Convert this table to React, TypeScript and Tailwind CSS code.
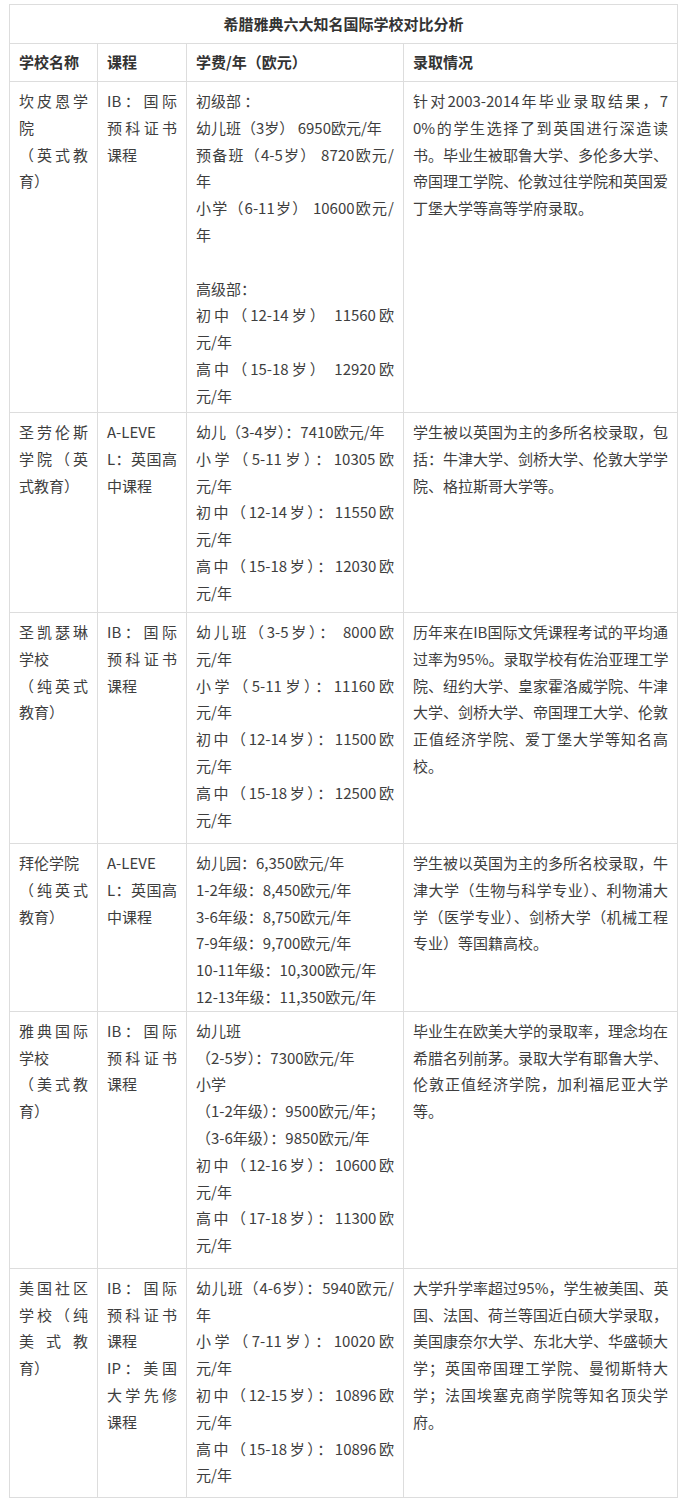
import React from 'react';

// each cell is a list of paragraphs; '|' marks where the original text wrapped
type Cell = string[];

interface Row {
  h: string;
  name: Cell;
  course: Cell;
  fee: Cell;
  result: Cell;
}

const IB: Cell = ['IB：国际|预科证书|课程'];
const AL: Cell = ['A-LEVE|L：英国高|中课程'];

const rows: Row[] = [
  {
    h: 'h-[331px]',
    name: ['坎皮恩学|院', '（英式教|育）'],
    course: IB,
    fee: [
      '初级部 ：',
      '幼儿班（3岁） 6950欧元/年',
      '预备班（4-5岁） 8720欧元/|年',
      '小学（6-11岁） 10600欧元/|年',
      '\u00a0',
      '高级部：',
      '初中（12-14岁） 11560欧|元/年',
      '高中（15-18岁） 12920欧|元/年',
    ],
    result: [
      '针对2003-2014年毕业录取结果，7|0%的学生选择了到英国进行深造读|书。毕业生被耶鲁大学、多伦多大学、|帝国理工学院、伦敦过往学院和英国爱|丁堡大学等高等学府录取。',
    ],
  },
  {
    h: 'h-[200px]',
    name: ['圣劳伦斯|学院（英|式教育）'],
    course: AL,
    fee: [
      '幼儿（3-4岁）：7410欧元/年',
      '小学（5-11岁）：10305欧|元/年',
      '初中（12-14岁）：11550欧|元/年',
      '高中（15-18岁）：12030欧|元/年',
    ],
    result: ['学生被以英国为主的多所名校录取，包|括：牛津大学、剑桥大学、伦敦大学学|院、格拉斯哥大学等。'],
  },
  {
    h: 'h-[231px]',
    name: ['圣凯瑟琳|学校', '（纯英式|教育）'],
    course: IB,
    fee: [
      '幼儿班（3-5岁）： 8000欧|元/年',
      '小学（5-11岁）：11160欧|元/年',
      '初中（12-14岁）：11500欧|元/年',
      '高中（15-18岁）：12500欧|元/年',
    ],
    result: [
      '历年来在IB国际文凭课程考试的平均通|过率为95%。录取学校有佐治亚理工学|院、纽约大学、皇家霍洛威学院、牛津|大学、剑桥大学、帝国理工大学、伦敦|正值经济学院、爱丁堡大学等知名高|校。',
    ],
  },
  {
    h: 'h-[167px]',
    name: ['拜伦学院', '（纯英式|教育）'],
    course: AL,
    fee: [
      '幼儿园：6,350欧元/年',
      '1-2年级：8,450欧元/年',
      '3-6年级：8,750欧元/年',
      '7-9年级：9,700欧元/年',
      '10-11年级：10,300欧元/年',
      '12-13年级：11,350欧元/年',
    ],
    result: ['学生被以英国为主的多所名校录取，牛|津大学（生物与科学专业）、利物浦大|学（医学专业）、剑桥大学（机械工程|专业）等国籍高校。'],
  },
  {
    h: 'h-[257px]',
    name: ['雅典国际|学校', '（美式教|育）'],
    course: IB,
    fee: [
      '幼儿班',
      '（2-5岁）：7300欧元/年',
      '小学',
      '（1-2年级）：9500欧元/年；',
      '（3-6年级）：9850欧元/年',
      '初中（12-16岁）：10600欧|元/年',
      '高中（17-18岁）：11300欧|元/年',
    ],
    result: ['毕业生在欧美大学的录取率，理念均在|希腊名列前茅。录取大学有耶鲁大学、|伦敦正值经济学院，加利福尼亚大学|等。'],
  },
  {
    h: 'h-[229px]',
    name: ['美国社区|学校（纯|美式教|育）'],
    course: ['IB：国际|预科证书|课程', 'IP：美国|大学先修|课程'],
    fee: [
      '幼儿班（4-6岁）：5940欧元/|年',
      '小学（7-11岁）：10020欧|元/年',
      '初中（12-15岁）：10896欧|元/年',
      '高中（15-18岁）：10896欧|元/年',
    ],
    result: [
      '大学升学率超过95%，学生被美国、英|国、法国、荷兰等国近白硕大学录取，|美国康奈尔大学、东北大学、华盛顿大|学；英国帝国理工学院、曼彻斯特大|学；法国埃塞克商学院等知名顶尖学|府。',
    ],
  },
];

const Lines: React.FC<{ cell: Cell }> = ({ cell }) => (
  <>
    {cell.map((para, i) => {
      const parts = para.split('|');
      return parts.map((line, k) => (
        <div
          key={`${i}-${k}`}
          className={`whitespace-nowrap ${k < parts.length - 1 ? 'text-justify [text-align-last:justify]' : ''}`}
        >
          {line}
        </div>
      ));
    })}
  </>
);

const td = 'border border-[#dddddd] align-top px-[9px] pt-[6px] pb-0';
const th = 'border border-[#dddddd] align-middle px-[9px] font-bold text-left';

export default function App() {
  return (
    <div className="bg-white min-h-screen pl-[9px] pt-[4px] text-[15px] leading-[26.8px] text-[#3e3e3e] [font-family:'Noto_Sans_CJK_SC','Microsoft_YaHei',sans-serif]">
      <table className="table-fixed border-collapse w-[668px]">
        <colgroup>
          <col className="w-[88px]" />
          <col className="w-[89px]" />
          <col className="w-[217px]" />
          <col className="w-[274px]" />
        </colgroup>
        <thead>
          <tr className="h-[39px]">
            <th colSpan={4} className="border border-[#dddddd] align-middle font-bold text-center text-[#333333]">
              希腊雅典六大知名国际学校对比分析
            </th>
          </tr>
          <tr className="h-[38px] text-[#333333]">
            <th className={th}>学校名称</th>
            <th className={th}>课程</th>
            <th className={th}>学费/年（欧元）</th>
            <th className={th}>录取情况</th>
          </tr>
        </thead>
        <tbody>
          {rows.map((r, i) => (
            <tr key={i} className={r.h}>
              <td className={td}><Lines cell={r.name} /></td>
              <td className={td}><Lines cell={r.course} /></td>
              <td className={td}><Lines cell={r.fee} /></td>
              <td className={td}><Lines cell={r.result} /></td>
            </tr>
          ))}
        </tbody>
      </table>
    </div>
  );
}
